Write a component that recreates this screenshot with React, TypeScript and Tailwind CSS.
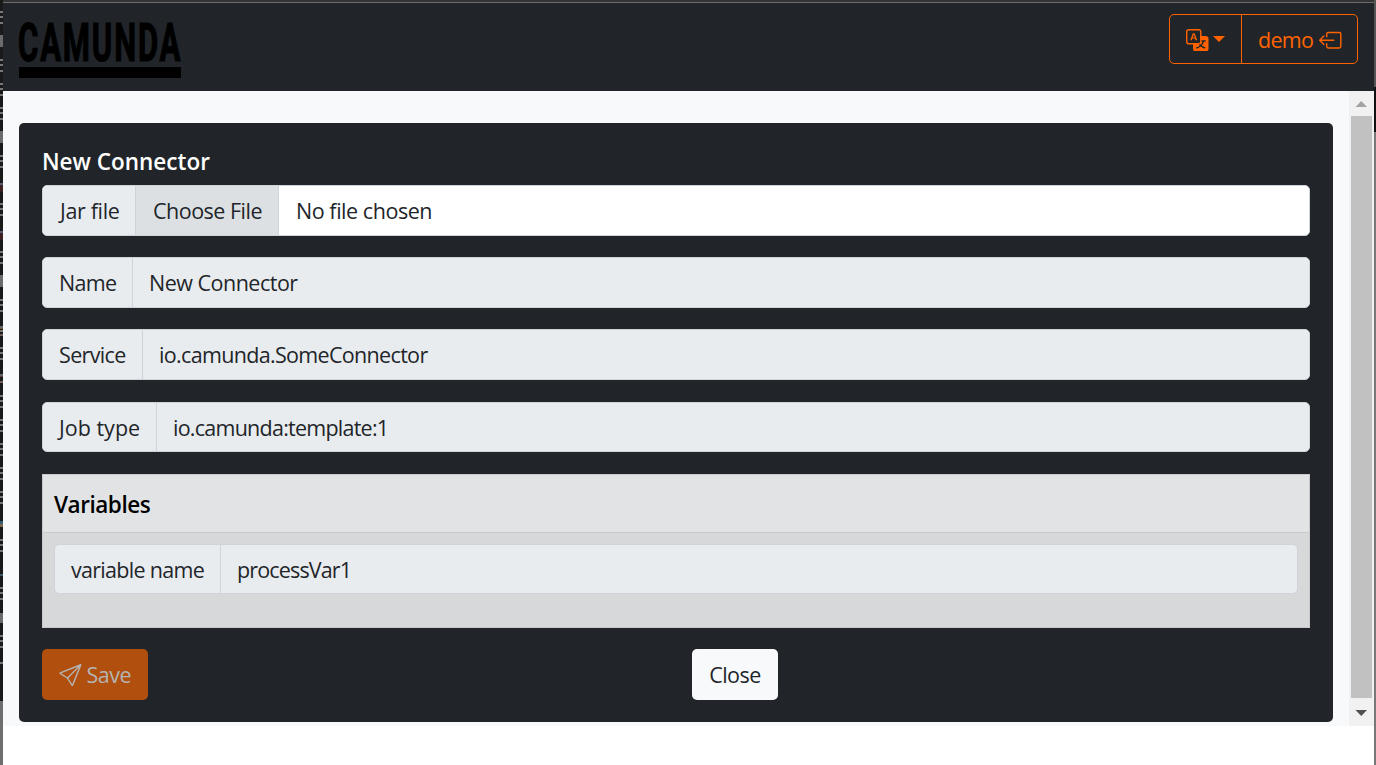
import { BsTranslate, BsBoxArrowLeft, BsSend } from "react-icons/bs";

const segments: [number, number, string][] = [
  [11, 2, "#777"], [16, 2, "#777"], [22, 2, "#777"], [35, 12, "#6b6b6b"], [59, 2, "#777"], [64, 2, "#777"], [70, 2, "#777"],
  [83, 2, "#777"], [88, 2, "#777"], [94, 2, "#777"], [107, 2, "#777"], [112, 2, "#777"], [118, 2, "#777"], [131, 12, "#6b6b6b"],
  [155, 2, "#777"], [160, 2, "#777"], [166, 2, "#777"], [183, 2, "#555f70"], [185, 7, "#3d2022"], [203, 2, "#777"], [208, 2, "#777"],
  [214, 2, "#777"], [231, 2, "#555f70"], [233, 7, "#3d2022"], [251, 2, "#777"], [256, 2, "#777"], [262, 2, "#777"],
  [275, 12, "#6b6b6b"], [299, 2, "#777"], [304, 2, "#777"], [310, 2, "#777"], [326, 2, "#666"], [328, 1, "#74583c"], [330, 2, "#777"], [334, 2, "#74605c"],
  [347, 2, "#777"], [352, 2, "#777"], [358, 2, "#777"], [374, 2, "#666"], [376, 1, "#5a4038"], [381, 2, "#74605c"],
  [395, 2, "#777"], [400, 2, "#777"], [406, 2, "#777"], [419, 2, "#777"], [424, 2, "#777"], [430, 2, "#777"],
  [443, 2, "#777"], [448, 2, "#777"], [454, 2, "#777"], [467, 2, "#777"], [472, 2, "#777"], [478, 2, "#777"],
  [491, 2, "#777"], [496, 2, "#777"], [502, 2, "#777"], [521, 3, "#315b78"], [524, 3, "#80654f"], [539, 2, "#777"], [544, 2, "#777"], [550, 2, "#777"],
  [574, 2, "#3d5868"], [587, 2, "#777"], [592, 2, "#777"], [598, 2, "#777"], [613, 10, "#6b6b6b"],
  [635, 2, "#777"], [640, 2, "#777"], [646, 2, "#777"], [662, 2, "#777"], [701, 64, "#6e6e6e"],
];

function EdgeStrip() {
  return (
    <svg className="block h-[765px] w-[3px] shrink-0 bg-[#1a1a1a]" viewBox="0 0 3 765" shapeRendering="crispEdges">
      {segments.map(([y, h, fill]) => (
        <rect key={y} x="0" y={y} width="3" height={h} fill={fill} />
      ))}
    </svg>
  );
}

function Logo() {
  return (
    <svg className="block h-[60px] w-[180px] overflow-visible" viewBox="0 0 180 60">
      <text
        transform="translate(0 43) scale(0.575 1)"
        strokeWidth="1.2"
        className="fill-black stroke-black font-['Roboto'] text-[54px] font-bold tracking-[3.200px]"
      >
        CAMUNDA
      </text>
      <rect x="1" y="49" width="162" height="11" />
    </svg>
  );
}

type FieldProps = { label: string; value: string; labelWidth: string; height: string; valueTracking: string; labelTracking?: string };

function Field({ label, value, labelWidth, height, valueTracking, labelTracking = "tracking-[-0.65px]" }: FieldProps) {
  return (
    <div className={`flex ${height} overflow-hidden rounded-[5px] border border-[#ced4da] bg-[#e9ecef]`}>
      <div className={`flex ${labelWidth} shrink-0 items-center border-r border-[#ced4da] pt-px pl-4 ${labelTracking}`}>{label}</div>
      <div className={`flex items-center pt-px pl-4 ${valueTracking}`}>{value}</div>
    </div>
  );
}

export default function App() {
  return (
    <div className="flex h-[765px] w-[1376px] overflow-hidden bg-white font-['Open_Sans',sans-serif] text-[21.5px] leading-[32px] tracking-[-0.5px] whitespace-nowrap text-[#212529]">
      <EdgeStrip />
      <div className="flex w-[1371px] shrink-0 flex-col">
        <div className="h-[3px] shrink-0 border-b border-[#6b6b6b] bg-[#333]" />
        <header className="flex h-[88px] shrink-0 items-start justify-between bg-[#212529] pr-4 pl-[15px]">
          <div className="pt-[15px]">
            <Logo />
          </div>
          <div className="mt-[11px] flex h-[50px] w-[189px] rounded-[5px] border border-[#ff6300] text-[#ff6300]">
            <button className="flex w-[72px] items-center border-r border-[#ff6300] pt-0.5 pl-4">
              <BsTranslate className="size-[22.500px]" />
              <svg className="mb-[2px] ml-[4px] h-[6px] w-[12px]" viewBox="0 0 12 6">
                <path d="M0 0h12L6 6z" fill="currentColor" />
              </svg>
            </button>
            <button className="flex items-center pt-0.5 pl-4">
              <span className="tracking-[-0.7px]">demo</span>
              <BsBoxArrowLeft className="ml-[6px] size-[22.500px]" />
            </button>
          </div>
        </header>
        <div className="flex h-[635px] shrink-0 bg-[#f8f9fa]">
          <main className="w-[1346px] shrink-0 pt-8 pl-4">
            <section className="h-[599px] w-[1314px] rounded-[5px] bg-[#212529] px-[23px] pt-[23px]">
              <h1 className="h-[39px] text-[22.5px] font-semibold tracking-[0px] text-white">New Connector</h1>
              <div className="flex h-[51px] overflow-hidden rounded-[5px] border border-[#ced4da] bg-white">
                <div className="flex w-[93px] shrink-0 items-center border-r border-[#ced4da] bg-[#e9ecef] pt-px pl-[17px] tracking-[-0.35px]">Jar file</div>
                <div className="flex w-[143px] shrink-0 items-center border-r border-[#ced4da] bg-[#dde0e3] pt-px pl-[17px]">Choose File</div>
                <div className="flex items-center pt-px pl-[17px] tracking-[-0.45px]">No file chosen</div>
              </div>
              <div className="mt-[21px] flex flex-col">
                <Field label="Name" value="New Connector" labelWidth="w-[90px]" height="h-[51px]" valueTracking="tracking-[-0.5px]" />
                <div className="h-[21px]" />
                <Field label="Service" value="io.camunda.SomeConnector" labelWidth="w-[100px]" height="h-[51px]" valueTracking="tracking-[-0.67px]" />
                <div className="h-[22px]" />
                <Field label="Job type" value="io.camunda:template:1" labelWidth="w-[114px]" height="h-[50px]" valueTracking="tracking-[-0.75px]" labelTracking="tracking-[0px]" />
              </div>
              <div className="mt-[22px] h-[154px] border border-[#c8cacc] bg-[#d6d8d9]">
                <div className="flex h-[58px] items-center border-b border-[#c8cacc] bg-[#e1e3e5] pt-0.5 pl-[11px] text-[22.5px] font-semibold tracking-[-0.45px] text-black">
                  Variables
                </div>
                <div className="px-[11px] pt-[11px]">
                  <Field label="variable name" value="processVar1" labelWidth="w-[166px]" height="h-[50px]" valueTracking="tracking-[-0.85px]" labelTracking="tracking-[-0.7px]" />
                </div>
              </div>
              <div className="mt-[21px] flex">
                <button className="flex h-[51px] w-[106px] items-center rounded-[5px] bg-[#b04f0e] pt-px pl-[17px] text-[#b5b4b3]">
                  <BsSend className="mr-[5px] size-[22.500px]" />
                  Save
                </button>
                <button className="ml-[544px] flex h-[51px] w-[86px] items-center justify-center rounded-[5px] bg-[#f8f9fa] pt-px">Close</button>
              </div>
            </section>
          </main>
          <div className="flex w-[25px] shrink-0 flex-col items-center bg-[#f1f1f1]">
            <svg className="block h-[25px] w-[25px]" viewBox="0 0 25 25">
              <path d="M6.500 16h11.500l-5.750-6z" fill="#a3a3a3" />
            </svg>
            <div className="h-[582px] w-[21px] bg-[#c1c1c1]" />
            <svg className="block h-[28px] w-[25px]" viewBox="0 0 25 28">
              <path d="M6.500 12h11.500l-5.750 6z" fill="#505050" />
            </svg>
          </div>
        </div>
      </div>
      <div className="flex w-[2px] shrink-0 flex-col">
        <div className="h-[87px] bg-[#555]" />
        <div className="h-[45px] bg-[#111]" />
        <div className="flex-1 bg-[#777]" />
      </div>
    </div>
  );
}
